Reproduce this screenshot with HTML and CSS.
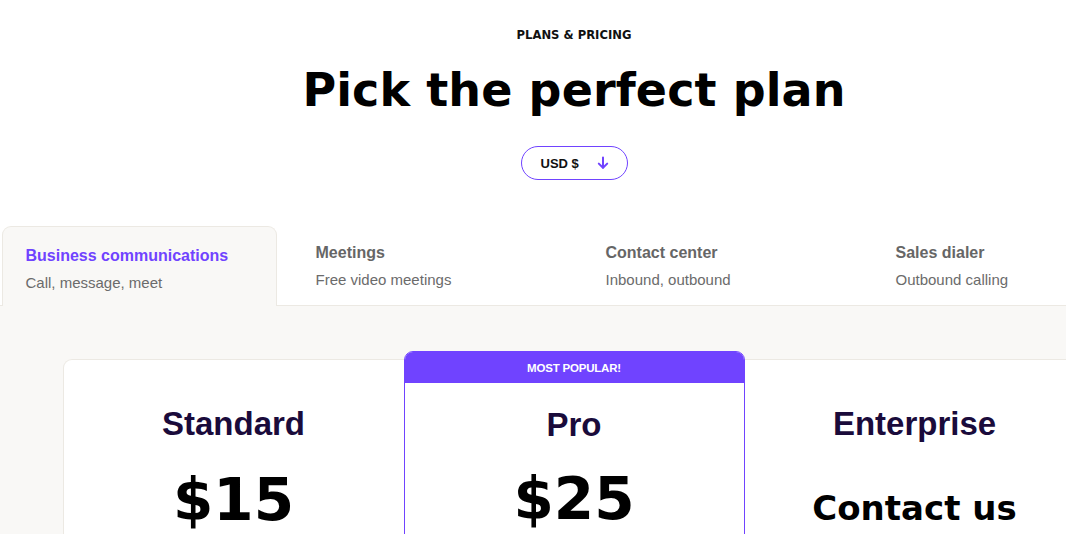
FILE: index.html
```html
<!DOCTYPE html>
<html lang="en">
<head>
<meta charset="utf-8">
<title>Plans &amp; Pricing</title>
<link rel="stylesheet" href="styles.css">
</head>
<body>
<div class="page">
  <header class="hero">
    <p class="eyebrow">PLANS &amp; PRICING</p>
    <h1 class="headline">Pick the perfect plan</h1>
    <button class="currency" type="button">
      <span class="currency-label">USD $</span>
      <svg class="currency-arrow" viewBox="0 0 12 14" width="12" height="14" aria-hidden="true">
        <path d="M6 1.5v10.5M1.8 7.6L6 11.8l4.2-4.2" fill="none" stroke="#7043ff" stroke-width="2" stroke-linecap="round" stroke-linejoin="round"/>
      </svg>
    </button>
  </header>

  <nav class="tabs">
    <div class="tab tab-active">
      <div class="tab-title">Business communications</div>
      <div class="tab-sub">Call, message, meet</div>
    </div>
    <div class="tab">
      <div class="tab-title">Meetings</div>
      <div class="tab-sub">Free video meetings</div>
    </div>
    <div class="tab">
      <div class="tab-title">Contact center</div>
      <div class="tab-sub">Inbound, outbound</div>
    </div>
    <div class="tab">
      <div class="tab-title">Sales dialer</div>
      <div class="tab-sub">Outbound calling</div>
    </div>
  </nav>

  <section class="plans">
    <div class="cards">
      <article class="card card-first">
        <div class="card-body">
          <h2 class="plan-name">Standard</h2>
          <div class="plan-price">$15</div>
        </div>
      </article>
      <article class="card card-popular">
        <div class="popular-bar">MOST POPULAR!</div>
        <div class="card-body card-body-popular">
          <h2 class="plan-name">Pro</h2>
          <div class="plan-price">$25</div>
        </div>
      </article>
      <article class="card card-last">
        <div class="card-body">
          <h2 class="plan-name">Enterprise</h2>
          <div class="plan-price plan-contact">Contact us</div>
        </div>
      </article>
    </div>
  </section>
</div>
</body>
</html>
```

FILE: styles.css
```css
html {
  overflow: hidden;
}

body {
  margin: 0;
  background: #ffffff;
  font-family: "Liberation Sans", Arial, sans-serif;
  color: #111111;
}

.page {
  width: 1148px;
}

.hero {
  display: flex;
  flex-direction: column;
  align-items: center;
}

.eyebrow {
  margin: 27px 0 0;
  font-family: "DejaVu Sans", sans-serif;
  font-weight: 700;
  font-size: 11.6px;
  line-height: 16px;
  color: #111111;
}

.headline {
  margin: 19px 0 0;
  font-family: "DejaVu Sans", sans-serif;
  font-weight: 700;
  font-size: 46px;
  line-height: 56px;
  color: #000000;
  letter-spacing: 0.1px;
}

.currency {
  margin-top: 28px;
  height: 34px;
  width: 107px;
  box-sizing: border-box;
  border: 1px solid #7043ff;
  border-radius: 17px;
  background: #ffffff;
  display: flex;
  align-items: center;
  justify-content: space-between;
  padding: 0 18px 0 19px;
  font-family: "Liberation Sans", Arial, sans-serif;
  cursor: pointer;
}

.currency-label {
  font-weight: 700;
  font-size: 13px;
  color: #111111;
}

.currency-arrow {
  display: block;
}

.tabs {
  margin-top: 46px;
  display: flex;
  justify-content: center;
  gap: 15px;
  border-bottom: 1px solid #ece9e3;
}

.tab {
  width: 275px;
  height: 79px;
  box-sizing: border-box;
  padding: 15px 23px 0;
  border: 1px solid transparent;
  border-bottom: none;
}

.tab-active {
  background: #f9f8f6;
  border-color: #ece9e3;
  border-radius: 9px 9px 0 0;
  padding-top: 18px;
  height: 80px;
  margin-bottom: -1px;
}

.tab-title {
  font-weight: 700;
  font-size: 16px;
  line-height: 22px;
  color: #666666;
}

.tab-active .tab-title {
  color: #7043ff;
}

.tab-sub {
  margin-top: 5px;
  font-size: 15px;
  line-height: 22px;
  color: #6b6b6b;
}

.plans {
  background: #f9f8f6;
  padding-top: 53px;
  height: 400px;
}

.cards {
  display: grid;
  grid-template-columns: 341px 341px 341px;
  justify-content: center;
  align-items: start;
}

.card {
  background: #ffffff;
  border: 1px solid #ece9e3;
  min-height: 320px;
}

.card-first {
  border-right: none;
  border-radius: 9px 0 0 0;
}

.card-last {
  border-left: none;
  border-radius: 0 9px 0 0;
}

.card-popular {
  margin-top: -8px;
  border-color: #7043ff;
  border-radius: 9px 9px 0 0;
  overflow: hidden;
  min-height: 328px;
}

.popular-bar {
  height: 31px;
  background: #7043ff;
  color: #ffffff;
  font-weight: 700;
  font-size: 11.5px;
  letter-spacing: -0.2px;
  display: flex;
  align-items: center;
  justify-content: center;
}

.card-body {
  padding-top: 44px;
  display: flex;
  flex-direction: column;
  align-items: center;
}

.card-body-popular {
  padding-top: 22px;
}

.plan-name {
  margin: 0;
  font-weight: 700;
  font-size: 33px;
  line-height: 40px;
  color: #1a0b3b;
}

.card-body-popular .plan-price {
  margin-top: 22px;
}

.plan-price {
  margin-top: 24px;
  font-family: "DejaVu Sans", sans-serif;
  font-weight: 700;
  font-size: 58px;
  line-height: 64px;
  color: #000000;
}

.plan-contact {
  font-size: 34px;
  margin-top: 32px;
}
```
